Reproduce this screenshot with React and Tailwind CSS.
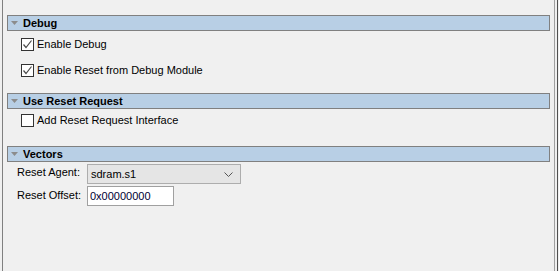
import React from "react";

const font = { fontFamily: '"Liberation Sans", Arial, sans-serif' };

function Header({ title }) {
  return (
    <div className="flex h-[16px] items-center border border-[#808080] bg-[#b8cfe5]">
      <svg width="7" height="4" viewBox="0 0 7 4" className="ml-[3px] mr-[5px]">
        <path d="M0 0 H7 L3.5 4 Z" fill="#8c8c8c" />
      </svg>
      <span className="text-[11px] font-bold leading-none text-black">{title}</span>
    </div>
  );
}

function Check({ checked, label, className = "" }) {
  return (
    <div className={`flex h-[13px] items-center pl-[14px] ${className}`}>
      <div className="flex h-[13px] w-[13px] items-center justify-center border border-[#333333] bg-white">
        {checked && (
          <svg width="11" height="11" viewBox="0 0 11 11">
            <path d="M1.5 5.5 L4 8.5 L9.5 1.5" fill="none" stroke="#4a4a4a" strokeWidth="1.2" />
          </svg>
        )}
      </div>
      <span className="ml-[3px] text-[11px] leading-none text-black">{label}</span>
    </div>
  );
}

export default function App() {
  return (
    <div className="flex h-[271px] w-[559px] bg-[#f0f0f0]" style={font}>
      <div className="ml-[2px] flex w-[553px] flex-col border-l border-r border-l-[#808080] border-r-[#a0a0a0] px-[4px] pt-[15px]">
        {/* debug */}
        <Header title="Debug" />
        <Check checked label="Enable Debug" className="mt-[7px]" />
        <Check checked label="Enable Reset from Debug Module" className="mt-[13px]" />

        {/* use reset request */}
        <div className="mt-[16px]">
          <Header title="Use Reset Request" />
        </div>
        <Check label="Add Reset Request Interface" className="mt-[5px]" />

        {/* vectors */}
        <div className="mt-[19px]">
          <Header title="Vectors" />
        </div>
        <div className="mt-[2px] grid grid-cols-[70px_auto] gap-y-[2px] pl-[10px] text-[11px] text-black">
          <div className="pt-[3px] leading-none">Reset Agent:</div>
          <div className="flex h-[20px] w-[154px] items-center justify-between border border-[#adadad] bg-[#e5e5e5] pl-[3px] pr-[7px]">
            <span className="leading-none">sdram.s1</span>
            <svg width="9" height="5" viewBox="0 0 9 5">
              <path d="M0.5 0.5 L4.5 4.5 L8.5 0.5" fill="none" stroke="#555555" strokeWidth="1" />
            </svg>
          </div>
          <div className="pt-[4px] leading-none">Reset Offset:</div>
          <div className="flex h-[20px] w-[87px] items-center border border-[#a0a0a0] bg-white pl-[2px]">
            <span className="leading-none text-[#000033]">0x00000000</span>
          </div>
        </div>
      </div>
      <div className="ml-[2px] w-px bg-[#505050]" />
    </div>
  );
}
